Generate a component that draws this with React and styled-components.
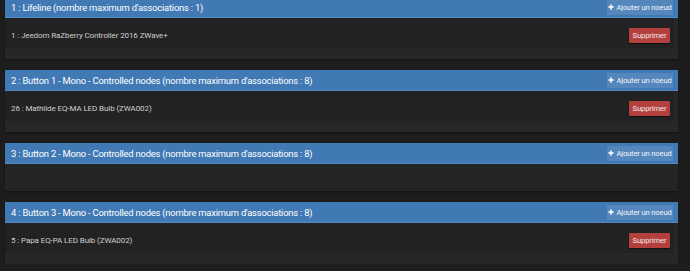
import React from "react";
import styled, { createGlobalStyle } from "styled-components";

const GlobalStyle = createGlobalStyle`
  body {
    margin: 0;
    background: #1d1d1d;
    font-family: Roboto, "Liberation Sans", sans-serif;
    overflow: hidden;
  }
`;

const Page = styled.div`
  display: flex;
  flex-direction: column;
  gap: 11px;
  padding: 0 12px 0 5px;
  margin-top: -3px;
`;

const Panel = styled.section`
  display: flex;
  flex-direction: column;
  background: #252626;
  box-shadow: 0 1px 2px rgba(0, 0, 0, 0.4);
`;

const Header = styled.div`
  height: 21px;
  box-sizing: border-box;
  display: flex;
  align-items: center;
  justify-content: space-between;
  padding: 0 5px 0 6px;
  background: #4179b4;
  border-bottom: 1px solid #5289c2;
`;

const Title = styled.h3`
  margin: 0;
  font-size: 9.4px;
  letter-spacing: -0.2px;
  font-weight: 400;
  color: #ffffff;
  white-space: nowrap;
`;

const AddButton = styled.button`
  height: 15px;
  width: 66px;
  flex-shrink: 0;
  display: flex;
  align-items: center;
  justify-content: center;
  gap: 2px;
  border: none;
  border-radius: 1px;
  padding: 0;
  background: rgba(255, 255, 255, 0.11);
  color: #f2f5fa;
  font-family: inherit;
  font-size: 7.6px;
  letter-spacing: -0.15px;
  white-space: nowrap;

  svg {
    flex-shrink: 0;
  }
`;

const Body = styled.div`
  padding: 0 4px 11px 0;
  min-height: ${(p) => (p.$empty ? "27px" : "0")};
  box-sizing: border-box;
  background: ${(p) => (p.$empty ? "#242525" : "#262827")};
`;

const Row = styled.div`
  height: 30px;
  box-sizing: border-box;
  display: flex;
  align-items: center;
  justify-content: space-between;
  padding: 4px 4px 0 6px;
  background: #222222;
`;

const NodeName = styled.span`
  font-size: 8px;
  letter-spacing: -0.1px;
  color: #cfcfcf;
  white-space: nowrap;
`;

const DeleteButton = styled.button`
  width: 41px;
  height: 15px;
  border: none;
  border-radius: 1px;
  padding: 0;
  background: #b4403e;
  color: #f3e6e6;
  font-family: inherit;
  font-size: 7.6px;
  letter-spacing: -0.1px;
  box-shadow: 0 1px 1px rgba(0, 0, 0, 0.5);
`;

const Plus = () => (
  <svg width="6" height="6" viewBox="0 0 8 8">
    <path d="M4 0.5v7M0.5 4h7" stroke="#ffffff" strokeWidth="2" />
  </svg>
);

const groups = [
  { title: "1 : Lifeline (nombre maximum d'associations : 1)", nodes: ["1 : Jeedom RaZberry Controller 2016 ZWave+"] },
  { title: "2 : Button 1 - Mono - Controlled nodes (nombre maximum d'associations : 8)", nodes: ["26 : Mathilde EQ-MA LED Bulb (ZWA002)"] },
  { title: "3 : Button 2 - Mono - Controlled nodes (nombre maximum d'associations : 8)", nodes: [] },
  { title: "4 : Button 3 - Mono - Controlled nodes (nombre maximum d'associations : 8)", nodes: ["5 : Papa EQ-PA LED Bulb (ZWA002)"] },
];

export default function App() {
  return (
    <>
      <GlobalStyle />
      <Page>
        {groups.map((g) => (
          <Panel key={g.title}>
            <Header>
              <Title>{g.title}</Title>
              <AddButton>
                <Plus />
                Ajouter un noeud
              </AddButton>
            </Header>
            <Body $empty={g.nodes.length === 0}>
              {g.nodes.map((n) => (
                <Row key={n}>
                  <NodeName>{n}</NodeName>
                  <DeleteButton>Supprimer</DeleteButton>
                </Row>
              ))}
            </Body>
          </Panel>
        ))}
      </Page>
    </>
  );
}
